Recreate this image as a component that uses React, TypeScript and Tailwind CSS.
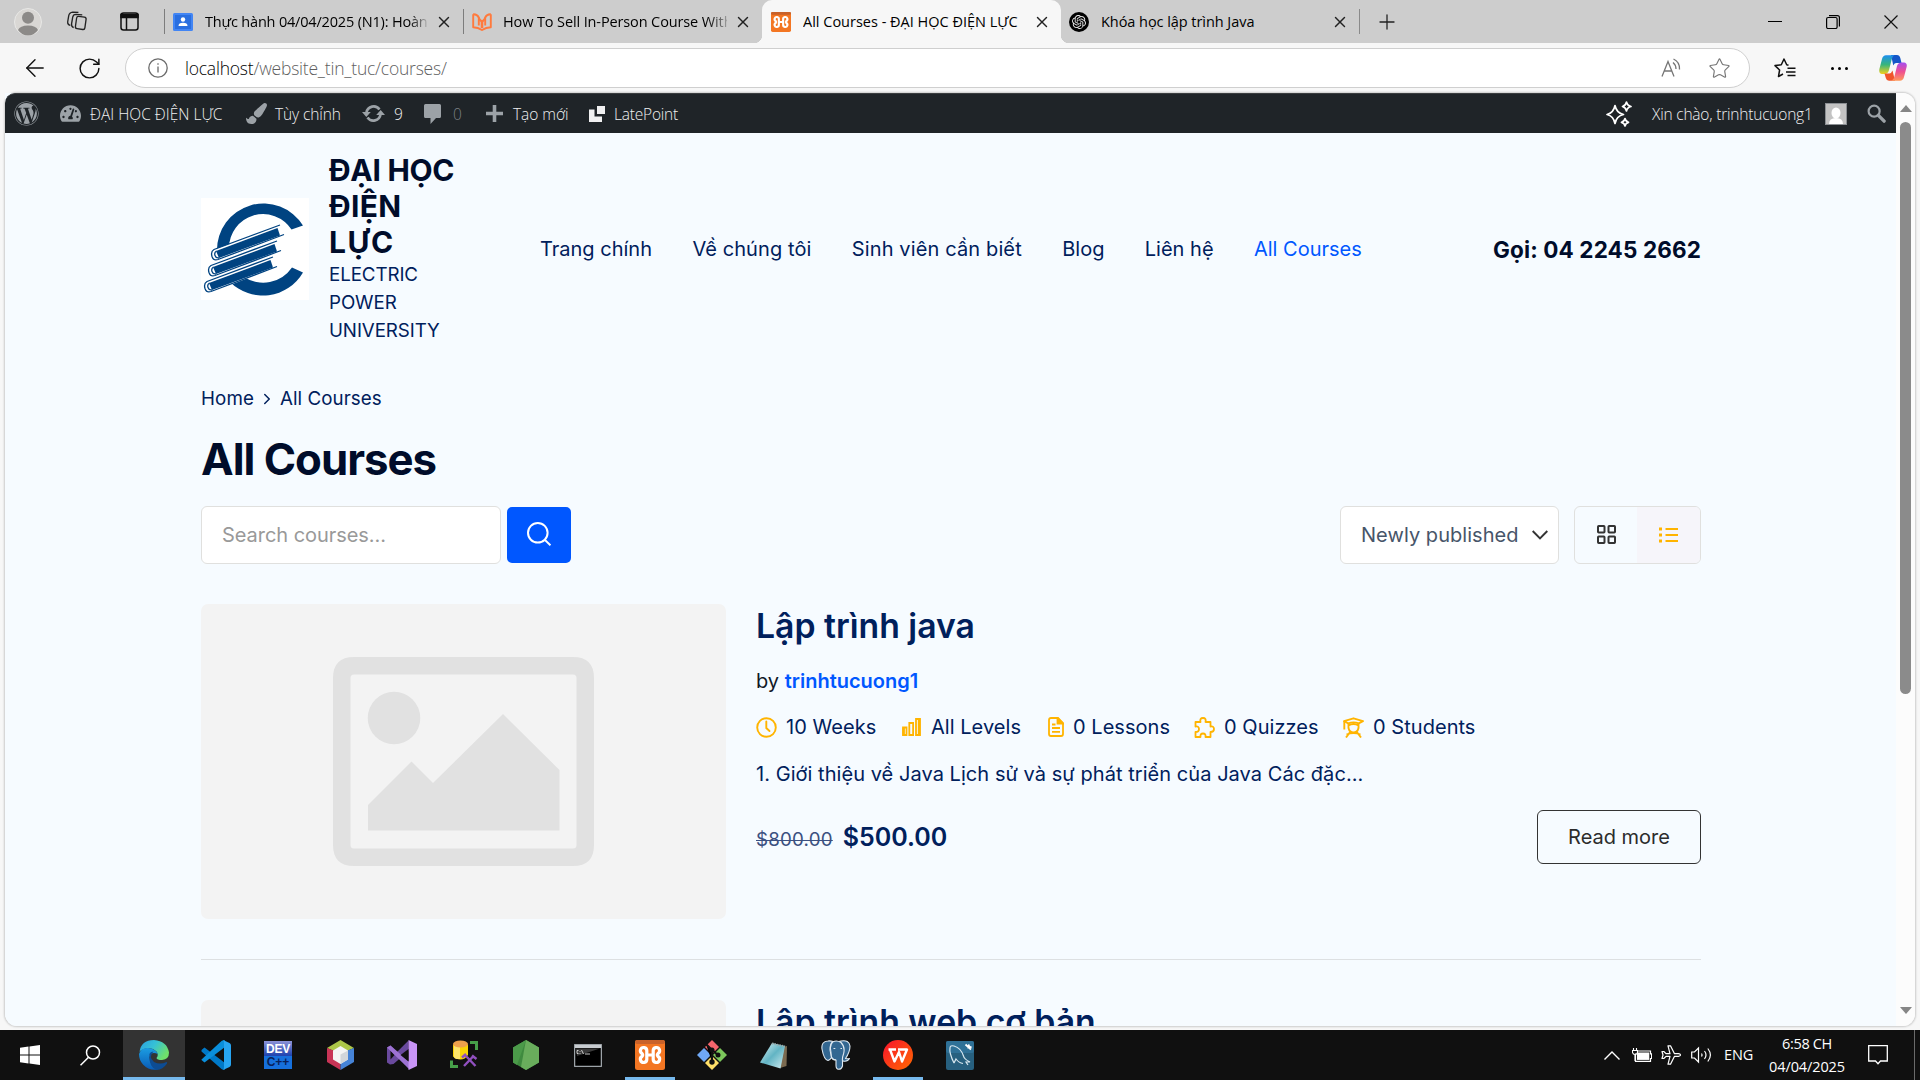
import type { ReactNode } from 'react';
import { ArrowLeft, ChevronRight, Plus, RotateCw, Star, X } from 'lucide-react';
import { FaPaintBrush, FaTachometerAlt, FaWordpress } from 'react-icons/fa';
import { SiOpenai } from 'react-icons/si';

/* ---------- small drawings ---------- */

function XamppIcon({ className }: { className: string }) {
  return (
    <svg viewBox="0 0 30 30" className={className} preserveAspectRatio="none">
      <rect width="30" height="30" rx="2.5" fill="#f37623" />
      <rect width="30" height="4" rx="2" fill="#c9622a" />
      <path
        d="M11.800 15V10.800A3.200 3.200 0 1 0 7 13.500Q8.300 15 7 16.500A3.200 3.200 0 1 0 11.800 19.200V15H18.200V10.800A3.200 3.200 0 1 1 23 13.500Q21.700 15 23 16.500A3.200 3.200 0 1 1 18.200 19.200V15"
        fill="none"
        stroke="#fff"
        strokeWidth="3.200"
        strokeLinejoin="round"
      />
    </svg>
  );
}

function WorkspacesIcon() {
  return (
    <svg viewBox="0 0 22 22" className="h-[21px] w-[22px]" fill="none" stroke="#222" strokeWidth="1.4">
      <rect x="10" y="6" width="10" height="13" rx="2" transform="rotate(8 15 12)" />
      <path d="M7.500 17.500C5.500 16.500 5 15.500 5.300 13.500L6.500 6.500Q7 3.500 10 3.500L16.500 4" />
      <path d="M4 15C1.800 14.500 1 13 1.300 11L2.300 5Q3 1.500 6.500 1.200L12.500 1.500" />
    </svg>
  );
}

function TabActionsIcon() {
  return (
    <svg viewBox="0 0 19 19" className="h-[19px] w-[19px]" fill="none" stroke="#111" strokeWidth="1.5">
      <rect x="1" y="1" width="17" height="17" rx="2.500" />
      <path d="M1 2.500h17v3H1z" fill="#111" />
      <path d="M6.500 6v12" />
    </svg>
  );
}

function ProfileIcon() {
  return (
    <svg viewBox="0 0 28 28" className="h-7 w-7">
      <circle cx="14" cy="14" r="13.500" fill="#d9d7d4" stroke="#e8e8e6" />
      <circle cx="14" cy="9.800" r="6" fill="#8c8a88" />
      <path d="M4 22Q6 17.500 14 17.500T24 22Q20 27.500 14 27.500T4 22Z" fill="#8c8a88" />
    </svg>
  );
}

function ClassroomIcon() {
  return (
    <svg viewBox="0 0 20 18" className="h-[18px] w-5">
      <rect width="20" height="18" rx="1.500" fill="#4285f4" />
      <rect x="2" y="2" width="16" height="14" fill="#2a6fe0" />
      <circle cx="10" cy="6.500" r="2.200" fill="#fff" />
      <path d="M5.500 13q0-3.300 4.500-3.300t4.500 3.300z" fill="#fff" />
    </svg>
  );
}

function BookOwlIcon() {
  return (
    <svg viewBox="0 0 20 18" className="h-[18px] w-5" fill="none" stroke="#ff7a3d" strokeWidth="1.900" strokeLinejoin="round">
      <path d="M1.200 1.300Q5 1 6.800 4.500V12.500M18.800 1.300Q15 1 13.200 4.500V12.500M1.200 1.300V14.200Q6 14.200 10 17Q14 14.200 18.800 14.200V1.300" />
      <path d="M6.800 4.500Q7.500 7.500 10 8.500Q12.500 7.500 13.200 4.500" />
      <path d="M10 8v7" strokeWidth="2.600" />
    </svg>
  );
}

function ReadAloudIcon() {
  return (
    <svg viewBox="0 0 21 20" className="h-5 w-[21px]" fill="none" stroke="#767676" strokeWidth="1.300">
      <path d="M1 18.500L7 3.500L13 18.500M3 13h8" />
      <path d="M12 4.500Q15 7 15 11M12.500 1Q19 4 18.500 11.500" />
    </svg>
  );
}

function FavoritesIcon() {
  return (
    <svg viewBox="0 0 22 20" className="h-5 w-[22px]" fill="none" stroke="#111" strokeWidth="1.500" strokeLinejoin="round">
      <path d="M14.500 7.300L12.700 6.800L10 1L7.300 6.800L1 7.600L5.600 12L4.500 18.500L9 16" />
      <path d="M13.500 10.300h8M12 14h9.500M13.500 17.500h8" />
    </svg>
  );
}

function CopilotIcon() {
  return (
    <svg viewBox="0 0 28 26" className="h-[26px] w-7">
      <defs>
        <linearGradient id="cop-a" x1="0" y1="0" x2="0" y2="1">
          <stop offset="0" stopColor="#1d8ff0" />
          <stop offset=".5" stopColor="#37b57c" />
          <stop offset="1" stopColor="#f3d01c" />
        </linearGradient>
        <linearGradient id="cop-b" x1="0" y1="0" x2="0" y2="1">
          <stop offset="0" stopColor="#a44ef0" />
          <stop offset=".5" stopColor="#ee4f92" />
          <stop offset="1" stopColor="#ff9a5a" />
        </linearGradient>
      </defs>
      <path d="M12 0H18Q20.500 0 21.300 3L22.500 8H17Q15 8 14.300 10.500Z" fill="#1456c8" />
      <path d="M7 0.300H15.500Q13.500 1 12.800 4L10 15Q9 19 5.500 19H3Q-0.500 18.500 0.400 14L3 4Q4 0.300 7 0.300Z" fill="url(#cop-a)" />
      <path d="M16 25.800H10Q7.500 25.800 6.800 23L5.500 18.500H10.500Q12.500 18 13.500 15.500Z" fill="#f0552b" />
      <path d="M21 25.800H12.500Q14.500 25 15.300 22L18 11Q19 7.500 22.500 7.500H25Q28.500 8 27.600 12L25 22Q24 25.800 21 25.800Z" fill="url(#cop-b)" />
    </svg>
  );
}

function UpdateIcon() {
  return (
    <svg viewBox="0 0 23 19" className="h-[19px] w-[23px]" fill="none" stroke="#9ca2a7" strokeWidth="2.600">
      <path d="M4.500 8.500A7.200 7.200 0 0 1 17.500 5.500M18.500 10.500A7.200 7.200 0 0 1 5.500 13.500" />
      <path d="M0 8L4.300 13L8.800 8ZM23 11L18.700 6L14.200 11Z" fill="#9ca2a7" stroke="none" />
    </svg>
  );
}

function CommentIcon() {
  return (
    <svg viewBox="0 0 17 20" className="h-5 w-[17px]">
      <path d="M1.500 0h14Q17 0 17 1.500v11Q17 14 15.500 14H12L6.500 20V14H1.500Q0 14 0 12.500v-11Q0 0 1.500 0z" fill="#9ca2a7" />
    </svg>
  );
}

function LatePointIcon() {
  return (
    <svg viewBox="0 0 16 16" className="h-4 w-4" fill="#f0f0f1">
      <path d="M0 3.500h5.500V10.500H13V16H0zM8 0h8v8H8z" />
    </svg>
  );
}

function SparklesIcon() {
  return (
    <svg viewBox="0 0 26 26" className="h-[26px] w-[26px]" fill="none" stroke="#fff" strokeWidth="1.700" strokeLinejoin="round">
      <path d="M9 4.500Q10.500 12 17.500 13.500Q10.500 15 9 22.500Q7.500 15 1 13.500Q7.500 12 9 4.500Z" />
      <path d="M20.500 1Q21.200 4.500 25 5.500Q21.200 6.500 20.500 10Q19.800 6.500 16.500 5.500Q19.800 4.500 20.500 1Z" />
      <path d="M19 17.500Q19.600 20.500 22.500 21.300Q19.600 22 19 25Q18.400 22 15.500 21.300Q18.400 20.500 19 17.500Z" />
    </svg>
  );
}

function UniversityLogo() {
  return (
    <svg viewBox="0 0 108 102" className="mt-px h-[102px] w-[108px] shrink-0">
      <rect width="108" height="102" fill="#fff" />
      <path
        d="M102 27.500L90.500 31.500A34 34 0 0 0 28 50L16 53A46.500 46.500 0 0 1 102 27.500ZM102 74.500A46.500 46.500 0 0 1 29 84L43 79A35 35 0 0 0 91 69.500Z"
        fill="#004381"
      />
      {[
        { x: 3, y: 83 },
        { x: 7, y: 67 },
        { x: 10, y: 51 },
      ].map((b) => (
        <g key={b.y} transform={`translate(${b.x} ${b.y})`}>
          <path d="M2 1L69 -24.500L69 -17L73 -14L7 11.500Q2 12 0.500 6Q-0.500 2 2 1Z" fill="#fff" />
          <path d="M5 2L66.500 -21L69 -13.500L8 9Z" fill="#004381" />
          <path
            d="M69 -24L3 0.500Q-0.500 2.500 1 7.500Q2.500 12 7 10.500L73 -14.500M5.500 2Q3 3.500 4 6.500T8 8.800"
            fill="none"
            stroke="#004381"
            strokeWidth="1.300"
          />
        </g>
      ))}
    </svg>
  );
}

function SearchGlyph() {
  return (
    <svg viewBox="0 0 24 24" className="h-6 w-6" fill="none" stroke="#fff" strokeWidth="2">
      <circle cx="10.800" cy="10.800" r="9.800" />
      <path d="M17.500 17.500L23.500 23.300" />
    </svg>
  );
}

function GridIcon() {
  return (
    <svg viewBox="0 0 19 19" className="h-[19px] w-[19px]" fill="none" stroke="#333" strokeWidth="2">
      <rect x="1" y="1" width="6.500" height="6.500" rx=".7" />
      <rect x="11.500" y="1" width="6.500" height="6.500" rx=".7" />
      <rect x="1" y="11.500" width="6.500" height="6.500" rx=".7" />
      <rect x="11.500" y="11.500" width="6.500" height="6.500" rx=".7" />
    </svg>
  );
}

function ListIcon() {
  return (
    <svg viewBox="0 0 19 16" className="h-4 w-[19px]" fill="#ffb400">
      <path d="M0 .5h3v3H0zM0 6.500h3v3H0zM0 12.500h3v3H0zM6.500 1h12.500v2H6.500zM6.500 7h12.500v2H6.500zM6.500 13h12.500v2H6.500z" />
    </svg>
  );
}

const meta: { label: string; width: string; icon: ReactNode }[] = [
  {
    label: '10 Weeks',
    width: 'w-[145px]',
    icon: (
      <svg viewBox="0 0 21 21" className="h-[21px] w-[21px]" fill="none" stroke="#ffb400" strokeWidth="1.900">
        <circle cx="10.500" cy="10.500" r="9.300" />
        <path d="M10.300 4.500v6.500l3.200 3" strokeLinecap="round" />
      </svg>
    ),
  },
  {
    label: 'All Levels',
    width: 'w-[147px]',
    icon: (
      <svg viewBox="0 0 19 18" className="mr-px ml-px h-[18px] w-[19px]" fill="none" stroke="#ffb400" strokeWidth="1.800">
        <path d="M1 9.500h3.500v7.500H1zM7.300 5h3.800v12H7.300zM14 1h4v16h-4z" />
        <path d="M1.700 10v7M17 1v16" strokeWidth="2.400" />
      </svg>
    ),
  },
  {
    label: '0 Lessons',
    width: 'w-[146px]',
    icon: (
      <svg viewBox="0 0 16 20" className="h-5 w-4" fill="none" stroke="#ffb400" strokeWidth="1.800">
        <path d="M3 1h7l5 5v11q0 2-2 2H3q-2 0-2-2V3q0-2 2-2z" />
        <path d="M9.500 1v5.500H15z" fill="#ffb400" />
        <path d="M4 7.500h3.500M4 11h8M4 14.800h8" />
      </svg>
    ),
  },
  {
    label: '0 Quizzes',
    width: 'w-[149px]',
    icon: (
      <svg viewBox="0 0 21 21" className="h-[21px] w-[21px]" fill="none" stroke="#ffb400" strokeWidth="1.800" strokeLinejoin="round">
        <path d="M1.500 5H6.500Q5.500 1 9 1T11.500 5H16.500V9.500Q20 9 20 12T16.500 15V20H11.500Q12 16.500 9 16.500T6.500 20H1.500V15Q5 15 5 12T1.500 9.500Z" />
      </svg>
    ),
  },
  {
    label: '0 Students',
    width: 'w-[140px]',
    icon: (
      <svg viewBox="0 0 21 21" className="h-[21px] w-[21px]" fill="none" stroke="#ffb400" strokeWidth="1.900" strokeLinejoin="round">
        <path d="M1 4.200L10.500 1.300L20 4.200L15.700 6.300Q10.500 4.500 5.300 6.300Z" />
        <path d="M1.300 4.500v8M5.500 6.500v4.500Q6.500 15.500 10.500 15.500T15.500 11V6.500M5.500 8.500Q10.500 5.500 15.500 8.500M3 20.500L7.500 14.500M18 20.500L13.500 14.500M3.500 17.500Q10.500 14.500 17.500 17.500" />
      </svg>
    ),
  },
];

/* ---------- browser frame ---------- */

function Tab({ icon, title, active, divider }: { icon: ReactNode; title: ReactNode; active?: boolean; divider?: boolean }) {
  return (
    <div className={`relative flex h-[43px] w-[299px] shrink-0 items-center pl-[9px] ${active ? 'rounded-t-[10px] bg-[#f7f7f7]' : ''}`}>
      {divider && <span className="absolute top-[9px] left-0 h-[25px] w-px bg-[#7d7d7d]" />}
      <span className="flex w-8 shrink-0 items-center">{icon}</span>
      <span className="relative w-[223px] overflow-hidden text-[14.5px] leading-5 whitespace-nowrap text-black">{title}</span>
      <X className="ml-[7px] h-[18px] w-[18px] shrink-0" strokeWidth={1.9} color="#222" />
    </div>
  );
}

function TabStrip() {
  return (
    <div className="flex h-[43px] shrink-0 items-center bg-[#cdcdcd]">
      <div className="flex w-[164px] items-center pl-[14px]">
        <ProfileIcon />
        <span className="ml-6">
          <WorkspacesIcon />
        </span>
        <span className="ml-8">
          <TabActionsIcon />
        </span>
      </div>
      <Tab
        divider
        icon={<ClassroomIcon />}
        title={
          <span className="bg-linear-to-r from-black from-90% to-[#bbb] bg-clip-text tracking-[-0.18px] text-transparent">
            Thực hành 04/04/2025 (N1): Hoàn
          </span>
        }
      />
      <Tab
        divider
        icon={<BookOwlIcon />}
        title={
          <span className="-ml-px bg-linear-to-r from-black from-87% to-[#ccc] bg-clip-text tracking-[-0.12px] text-transparent">
            How To Sell In-Person Course With
          </span>
        }
      />
      <div className="relative">
        <Tab active icon={<XamppIcon className="h-5 w-5" />} title="All Courses - ĐẠI HỌC ĐIỆN LỰC" />
        <span className="absolute bottom-0 -left-2 h-2 w-2 bg-[radial-gradient(circle_at_0_0,transparent_8px,#f7f7f7_8.5px)]" />
        <span className="absolute -right-2 bottom-0 h-2 w-2 bg-[radial-gradient(circle_at_100%_0,transparent_8px,#f7f7f7_8.5px)]" />
      </div>
      <div className="-ml-px">
        <Tab
          icon={
            <span className="flex h-5 w-5 items-center justify-center rounded-full bg-black">
              <SiOpenai size={14} color="#e8e8e8" />
            </span>
          }
          title={<span className="tracking-[-0.05px]">Khóa học lập trình Java</span>}
        />
      </div>
      <span className="h-[25px] w-px bg-[#8a8a8a]" />
      <Plus className="ml-[15px] h-6 w-6" strokeWidth={1.3} color="#222" />
      <div className="ml-auto flex items-center gap-[44px] pr-[22px]">
        <span className="h-px w-[14px] bg-black" />
        <svg viewBox="0 0 14 14" className="h-[14px] w-[14px]" fill="none" stroke="#000" strokeWidth="1.200">
          <rect x=".6" y="2.500" width="10.500" height="11" rx="1.500" />
          <path d="M3 .6H11.500Q13.400 .6 13.400 2.500V11.500" />
        </svg>
        <svg viewBox="0 0 14 14" className="h-[14px] w-[14px]" stroke="#111" strokeWidth="1.200">
          <path d="M.5 .5L13.500 13.500M13.500 .5L.5 13.500" />
        </svg>
      </div>
    </div>
  );
}

function AddressRow() {
  return (
    <div className="flex h-[50px] shrink-0 items-center bg-[#f7f7f7]">
      <ArrowLeft className="ml-[21px] h-[28px] w-[28px]" strokeWidth={1.2} color="#111" />
      <RotateCw className="ml-[28px] h-[25px] w-[25px]" strokeWidth={1.4} color="#111" />
      <div className="ml-[23px] flex h-10 w-[1625px] items-center rounded-full border border-[#cfcfcf] bg-white pr-[18px] pl-[22px]">
        <svg viewBox="0 0 20 20" className="h-5 w-5" fill="none" stroke="#6b6b6b" strokeWidth="1.300">
          <circle cx="10" cy="10" r="9.200" />
          <path d="M10 8.500v6M10 5.200v1.600" />
        </svg>
        <span className="ml-[17px] text-[17.5px] leading-6 font-light tracking-[-0.22px] text-[#5f5f5f]">
          <span className="text-black">localhost</span>/website_tin_tuc/courses/
        </span>
        <span className="ml-auto">
          <ReadAloudIcon />
        </span>
        <Star className="ml-[26px] h-[23px] w-[23px]" strokeWidth={1.2} color="#767676" />
      </div>
      <span className="ml-[24px]">
        <FavoritesIcon />
      </span>
      <span className="ml-[35px] flex gap-[4px]">
        <span className="h-[3px] w-[3px] rounded-full bg-black" />
        <span className="h-[3px] w-[3px] rounded-full bg-black" />
        <span className="h-[3px] w-[3px] rounded-full bg-black" />
      </span>
      <span className="ml-[31px]">
        <CopilotIcon />
      </span>
    </div>
  );
}

/* ---------- site ---------- */

function AdminBar() {
  return (
    <div className="flex h-10 shrink-0 items-center rounded-tl-[10px] border-t border-[#3b3e40] bg-[#1f2428] pl-[9px] text-[15.5px] leading-5 font-[350] text-[#f0f0f1]">
      <FaWordpress size={25} color="#9ca2a7" />
      <FaTachometerAlt size={21} color="#9ca2a7" className="ml-[21px]" />
      <span className="ml-[9px] w-[156px]">ĐẠI HỌC ĐIỆN LỰC</span>
      <FaPaintBrush size={21} color="#9ca2a7" />
      <span className="ml-[8px] w-[87px] tracking-[-0.1px]">Tùy chỉnh</span>
      <UpdateIcon />
      <span className="ml-[9px] w-[30px]">9</span>
      <CommentIcon />
      <span className="ml-[12px] w-[33px] text-[#7c8185]">0</span>
      <svg viewBox="0 0 17 17" className="h-[17px] w-[17px]" fill="#9ca2a7">
        <path d="M6.700 0h3.600v6.700H17v3.600h-6.700V17H6.700v-6.700H0V6.700h6.700z" />
      </svg>
      <span className="ml-[10px] w-[76px] tracking-[-0.05px]">Tạo mới</span>
      <LatePointIcon />
      <span className="ml-[9px] pt-px tracking-[-0.2px]">LatePoint</span>
      <span className="ml-auto">
        <SparklesIcon />
      </span>
      <span className="ml-[20px] w-[165px] tracking-[-0.2px] whitespace-nowrap">Xin chào, trinhtucuong1</span>
      <span className="ml-[8px] flex h-[22px] w-[22px] border border-[#8b8f93] bg-[#c3c3c3]">
        <svg viewBox="0 0 20 20" className="h-5 w-5" fill="#fff">
          <ellipse cx="10" cy="9" rx="4.500" ry="5.500" />
          <path d="M3 20q0-6 7-6t7 6z" />
        </svg>
      </span>
      <svg viewBox="0 0 20 20" className="mr-[10px] ml-[20px] h-[19px] w-[19px]" fill="none" stroke="#9ca2a7">
        <circle cx="7.500" cy="7.500" r="5.800" strokeWidth="2.300" />
        <path d="M12 12L18 18" strokeWidth="3.600" strokeLinecap="round" />
      </svg>
    </div>
  );
}

function SiteHeader() {
  return (
    <header className="mt-[18px] flex h-[194px] items-center">
      <UniversityLogo />
      <div className="ml-5 w-[150px]">
        <p className="text-[30px] leading-9 font-bold tracking-[-0.3px] text-[#000c2a]">
          ĐẠI HỌC
          <br />
          <span className="tracking-[0.3px]">ĐIỆN</span>
          <br />
          <span className="tracking-[1.6px]">LỰC</span>
        </p>
        <p className="mt-px text-[18.75px] leading-7 tracking-[-0.1px] text-[#00205c]">
          ELECTRIC
          <br />
          POWER
          <br />
          UNIVERSITY
        </p>
      </div>
      <nav className="ml-[61px] flex gap-[40.4px] pt-px text-xl whitespace-nowrap text-[#00205c]">
        <span>Trang chính</span>
        <span className="tracking-[0.08px]">Về chúng tôi</span>
        <span className="tracking-[0.13px]">Sinh viên cần biết</span>
        <span>Blog</span>
        <span>Liên hệ</span>
        <span className="text-[#0057ff]">All Courses</span>
      </nav>
      <span className="ml-auto pt-[3px] text-[22.5px] font-bold tracking-[0.13px] text-[#000c2a]">Gọi: 04 2245 2662</span>
    </header>
  );
}

function Toolbar() {
  return (
    <div className="mt-[24px] flex h-[58px] shrink-0 text-xl">
      <div className="flex w-[300px] items-center rounded-[6px] border border-[#e0e0de] bg-white pl-5 tracking-[-0.05px] text-[#999]">
        Search courses...
      </div>
      <div className="my-px ml-[6px] flex w-[64px] items-center justify-center rounded-[5px] bg-[#0057ff] pb-[2px]">
        <SearchGlyph />
      </div>
      <div className="ml-auto flex w-[219px] items-center rounded-[6px] border border-[#e0e0de] bg-white pl-[20px] tracking-[0.05px] text-[#475569]">
        Newly published
        <svg viewBox="0 0 16 10" className="ml-[13px] h-[10px] w-4" fill="none" stroke="#333" strokeWidth="1.900">
          <path d="M.7 1L8 8.500L15.300 1" />
        </svg>
      </div>
      <div className="ml-[15px] flex w-[127px] overflow-hidden rounded-[6px] border border-[#e0e0de]">
        <div className="flex w-[62px] items-center justify-center pb-[2px]">
          <GridIcon />
        </div>
        <div className="flex flex-1 items-center justify-center bg-[#f6f5fa] pb-px">
          <ListIcon />
        </div>
      </div>
    </div>
  );
}

function Thumbnail() {
  return (
    <div className="flex h-[315px] w-[525px] shrink-0 justify-center rounded-[7px] bg-[#f3f3f3] pt-[53px]">
      <svg viewBox="0 0 261 209" className="h-[209px] w-[261px]" fill="#e1e1e1">
        <path
          fillRule="evenodd"
          d="M21 0H240Q261 0 261 21V188Q261 209 240 209H21Q0 209 0 188V21Q0 0 21 0ZM21 17.500Q17.500 17.500 17.500 21V188Q17.500 191.500 21 191.500H240Q243.500 191.500 243.500 188V21Q243.500 17.500 240 17.500Z"
        />
        <circle cx="61" cy="61" r="26.300" />
        <path d="M35 148L78.500 104.500L100 126L170 57L226.500 113V173.500H35Z" />
      </svg>
    </div>
  );
}

function CourseCard({ title }: { title: string }) {
  return (
    <article className="flex h-[315px] shrink-0">
      <Thumbnail />
      <div className="ml-[30px] flex-1 pt-px text-xl leading-[30px] text-[#00205c]">
        <h2 className="text-[33.75px] leading-[42px] font-semibold">{title}</h2>
        <p className="mt-[19px] text-[#111827]">
          by <span className="font-semibold text-[#0057ff]">trinhtucuong1</span>
        </p>
        <div className="mt-[16px] flex h-[30px] items-center">
          {meta.map((m) => (
            <div key={m.label} className={`flex shrink-0 items-center gap-[9px] tracking-[0.04px] whitespace-nowrap ${m.width}`}>
              {m.icon}
              {m.label}
            </div>
          ))}
        </div>
        <p className="mt-[17px] tracking-[0.05px] whitespace-nowrap">
          1. Giới thiệu về Java Lịch sử và sự phát triển của Java Các đặc...
        </p>
        <div className="mt-[21px] flex h-[54px] items-center justify-between">
          <p className="flex items-baseline pt-[2px]">
            <span className="text-[18.75px] tracking-[0.2px] text-[#3b5080] line-through decoration-1">$800.00</span>
            <span className="ml-[10px] text-[25px] font-semibold">$500.00</span>
          </p>
          <span className="flex h-[54px] w-[164px] items-center justify-center rounded-[6px] border border-[#333] text-[#2c2c2c]">
            Read more
          </span>
        </div>
      </div>
    </article>
  );
}

function Site() {
  return (
    <div className="flex h-[933px] flex-1 flex-col overflow-hidden rounded-bl-[12px] bg-[#f6fbff]">
      <AdminBar />
      <main className="ml-[196px] flex w-[1500px] flex-col font-['Inter',sans-serif]">
        <SiteHeader />
        <div className="mt-[40px] flex h-7 shrink-0 items-center text-[18.75px] text-[#00205c]">
          <span className="tracking-[0.1px]">Home</span>
          <ChevronRight className="mx-[4px] h-[18px] w-[18px]" strokeWidth={2} />
          <span className="tracking-[0.06px]">All Courses</span>
        </div>
        <h1 className="mt-[25px] text-[43.75px] leading-[44px] font-bold tracking-[-1px] text-[#000c2a]">All Courses</h1>
        <Toolbar />
        <div className="mt-10">
          <CourseCard title="Lập trình java" />
        </div>
        <div className="my-10 h-px shrink-0 bg-[#dde0e2]" />
        <CourseCard title="Lập trình web cơ bản" />
      </main>
    </div>
  );
}

function Scrollbar() {
  return (
    <div className="flex h-[933px] w-[19px] flex-col items-center rounded-r-[12px] bg-[#fcfcfc]">
      <span className="mt-3 h-0 w-0 border-x-[6.500px] border-b-[7px] border-x-transparent border-b-[#868686]" />
      <span className="mt-[10px] h-[572px] w-[11px] rounded-full bg-[#8b8b8b]" />
      <span className="mt-auto mb-[12px] h-0 w-0 border-x-[6.500px] border-t-[7px] border-x-transparent border-t-[#868686]" />
    </div>
  );
}

/* ---------- taskbar ---------- */

function EdgeIcon() {
  return (
    <svg viewBox="0 0 30 30" className="h-[30px] w-[30px]">
      <defs>
        <linearGradient id="edge-a" x1="0" y1="0" x2="1" y2=".5">
          <stop offset="0" stopColor="#2a9fe0" />
          <stop offset=".5" stopColor="#35c1d6" />
          <stop offset="1" stopColor="#6fe06a" />
        </linearGradient>
        <linearGradient id="edge-b" x1="0" y1="0" x2="0" y2="1">
          <stop offset="0" stopColor="#1b9de2" />
          <stop offset="1" stopColor="#0a5bb5" />
        </linearGradient>
      </defs>
      <path d="M0.500 12Q2 0 15 0Q28 1 30 12.500Q30 19.500 23 20Q18 20 17.500 18Q20 15 17.500 11.500Q13 7 7 8.500Q2 9.500 0.500 12Z" fill="url(#edge-a)" />
      <path d="M0 14Q2 7.500 9 8Q16 8.500 19 14Q12 11 10.500 17Q10 25 19 29.500Q10 31 4 24.500Q0 20 0 14Z" fill="url(#edge-b)" />
      <path d="M10.500 16Q9.500 12 14.500 11.500Q9 17 15 22Q21 25 27.500 22Q28.500 22 28 23.500Q24 29.500 17.500 30Q10 27 10.500 16Z" fill="#0d4c93" />
    </svg>
  );
}

function VsCodeIcon() {
  return (
    <svg viewBox="0 0 30 30" className="h-[30px] w-[30px]">
      <path d="M0.500 10L3.500 7.500L24 23V29.500Q21.500 30 20.500 29L0.500 11.500Z" fill="#0079c8" />
      <path d="M0.500 19.500L20.500 1Q22 0 24 0.500V7L3.500 22.500L0.500 20Z" fill="#0a8fdc" />
      <path d="M22 0L28.500 3Q30 3.800 30 5.500V24.500Q30 26.200 28.500 27L22 30Q23 29 23 27V3Q23 1 22 0Z" fill="#27a5f2" />
    </svg>
  );
}

function NetBeansIcon() {
  return (
    <svg viewBox="0 0 27 30" className="h-[30px] w-[27px]">
      <path d="M13.500 0L27 8L20 11L13.500 8L7 11L0 8Z" fill="#acc648" />
      <path d="M0 8L6.500 10.500V19L13.500 23V30L0 22Z" fill="#c93456" />
      <path d="M27 8L20.500 10.500V19L13.500 23V30L27 22Z" fill="#4684d8" />
      <path d="M13.500 6L21 10.500V19.500L13.500 24L6 19.500V10.500Z" fill="#f4f4f4" />
      <path d="M13.500 14.500L21 10.500V19.500L13.500 24Z" fill="#d2d6da" />
    </svg>
  );
}

function VisualStudioIcon() {
  return (
    <svg viewBox="0 0 30 30" className="h-[30px] w-[30px]">
      <path d="M0 7.500L3.500 5.500L10 12L21.500 0.500V11L6.500 24L3 24.500L0 22.500Z" fill="#6a4a9e" />
      <path d="M3.500 10.500V19.500L7.500 15Z" fill="#101010" />
      <path d="M3.500 5.500L22.500 22V29.500L0 7.500Z" fill="#9d72d3" />
      <path d="M21.500 0L30 4V26L21.500 30Z" fill="#c894f6" />
      <path d="M21.500 9L13.500 15L21.500 21.500Z" fill="#101010" />
    </svg>
  );
}

function SsmsIcon() {
  return (
    <svg viewBox="0 0 28 30" className="h-[30px] w-7">
      <path d="M3 4.500H18V15Q15 19.500 10.500 19.500T3 16.500Z" fill="#fbd306" />
      <path d="M4 6h6v13H7Q4 18.500 4 16.500Z" fill="#fde46b" />
      <ellipse cx="10.500" cy="4" rx="7.500" ry="3.500" fill="#efa04c" />
      <path d="M20 2.500H26.500V10M1.500 20.500V26.500H8" fill="none" stroke="#46a049" strokeWidth="3" />
      <path d="M14 26L24 15.500M14.500 14.500L25.500 26M12 17.500L16 14M22 15.500L26.500 19" stroke="#9150c0" strokeWidth="2.400" />
    </svg>
  );
}

function ConsoleIcon() {
  return (
    <svg viewBox="0 0 28 23" className="h-[23px] w-7">
      <rect x=".5" y=".5" width="27" height="22" rx="1" fill="#000" stroke="#9da3a8" strokeWidth="1.500" />
      <rect x="1" y="1" width="26" height="3" fill="#c8ccd0" />
      <path d="M2 4.500H26L3 12Z" fill="#3a3a3a" />
      <path d="M4.500 6.500h-1.500v3h1.500M6 7v.8M6 9v.8M7.500 6l2 4M11 10h5" stroke="#ddd" strokeWidth=".9" fill="none" />
    </svg>
  );
}

function GitIcon() {
  return (
    <svg viewBox="0 0 30 30" className="h-[30px] w-[30px]">
      <path d="M15 0L22 7L15 14L8 7Z" fill="#f5656c" />
      <path d="M23 8L30 15L23 22L16 15Z" fill="#7cc75b" />
      <path d="M7 8L14 15L7 22L0 15Z" fill="#6fa8f5" />
      <path d="M15 16L22 23L15 30L8 23Z" fill="#ffdf68" />
      <path d="M9 4L15 10V22M15 10L21 15" stroke="#111" strokeWidth="2" />
      <circle cx="15" cy="10" r="2.500" fill="#111" />
      <circle cx="21" cy="15" r="2.500" fill="#111" />
      <circle cx="15" cy="22" r="2.700" fill="#111" />
    </svg>
  );
}

function NotepadIcon() {
  return (
    <svg viewBox="0 0 28 27" className="h-[27px] w-7">
      <defs>
        <linearGradient id="note" x1="0" y1="0" x2="1" y2="1">
          <stop offset="0" stopColor="#dff3f5" />
          <stop offset=".5" stopColor="#62b4c4" />
          <stop offset="1" stopColor="#d3eef2" />
        </linearGradient>
      </defs>
      <path d="M22 5L27 4L26.500 24L20 26Z" fill="#7b6a50" />
      <path d="M12 1L25 4L20.500 26.500L0 20.500Z" fill="url(#note)" />
      <path d="M12 1.500L25 4.500" stroke="#9aa" strokeWidth="2" strokeDasharray="1.500 1" />
    </svg>
  );
}

function PostgresIcon() {
  return (
    <svg viewBox="0 0 30 30" className="h-[30px] w-[30px]" fill="#336791" stroke="#dfe9f1" strokeWidth="1.100" strokeLinejoin="round">
      <path d="M7 1Q0 1.500 1 9Q3 20 7 20.500Q9 20 10.500 17.500L9 10Q9 4 12 1.500Q9.500 .7 7 1Z" />
      <path d="M20 1Q28 -.5 29 6Q29 12 24.500 18.500Q26 19 28.500 18.500Q26.500 22 22 21L20 17L21.500 10Q22 4 18 1.500Z" />
      <path d="M12 1.800Q16 0 20 2.500Q24.500 7 22.500 14Q21 18 21.500 21V26Q20.500 29.500 17.500 29.300Q15 29 15 25.500V20Q10 19.500 10.300 15L9.500 9Q9 4 12 1.800Z" />
      <path d="M10.500 17.500Q12 20.500 15 19.800M12.500 8.500h1.800M19.500 8.500h1.500" fill="none" />
    </svg>
  );
}

function WpsIcon() {
  return (
    <svg viewBox="0 0 30 30" className="h-[30px] w-[30px]">
      <defs>
        <linearGradient id="wps" x1="0" y1="0" x2="1" y2="1">
          <stop offset="0" stopColor="#f8122c" />
          <stop offset="1" stopColor="#ff6a00" />
        </linearGradient>
      </defs>
      <circle cx="15" cy="15" r="15" fill="url(#wps)" />
      <path d="M5.500 9.500H13M7 9.500L11.500 21.500L16 12L19 21.500L24 9.500H15" fill="none" stroke="#fff" strokeWidth="2.400" strokeLinejoin="round" />
    </svg>
  );
}

function WorkbenchIcon() {
  return (
    <svg viewBox="0 0 28 29" className="h-[29px] w-7" fill="none">
      <rect width="28" height="29" rx="2" fill="#27607f" />
      <rect width="28" height="12" rx="2" fill="#2f7197" />
      <path d="M8 22Q3 12 4 7Q4 4 8 5Q15 7 17.500 15Q18 18 24 21L20 21L22 24M8 22L10 18Q13 22 17 22.500" stroke="#d8e8f0" strokeWidth="1.200" />
      <path d="M19.500 3.500L25 8.500M23 3.500L22.500 6.500L25.500 6" stroke="#fff" strokeWidth="1.800" />
    </svg>
  );
}

function DevCppIcon() {
  return (
    <span className="flex h-7 w-7 flex-col items-center overflow-hidden bg-linear-to-b from-[#8d93d8] via-[#2446b0] to-[#0b3ca5] font-['Liberation_Sans',sans-serif] font-bold">
      <span className="pt-px text-[12px] leading-[14px] tracking-[-0.2px] text-white">DEV</span>
      <span className="w-full bg-[#1670dd] text-center text-[12px] leading-[13px] text-[#08205a]">C++</span>
    </span>
  );
}

function TaskButton({ children, state }: { children: ReactNode; state?: 'active' | 'open' }) {
  return (
    <div className={`relative flex h-[50px] w-[62px] shrink-0 items-center justify-center ${state === 'active' ? 'bg-[#333]' : ''}`}>
      {children}
      {state === 'active' && <span className="absolute inset-x-0 bottom-0 h-[3px] bg-[#76b9ed]" />}
      {state === 'open' && <span className="absolute inset-x-[6px] bottom-0 h-[3px] bg-[#76b9ed]" />}
    </div>
  );
}

function Taskbar() {
  return (
    <div className="flex h-[50px] shrink-0 items-center bg-[#101010]">
      <svg viewBox="0 0 20 20" className="ml-5 h-5 w-5" fill="#fff">
        <path d="M0 2.800L8.500 1.600V9.500H0zM9.500 1.400L20 0V9.500H9.500zM0 10.500H8.500V18.400L0 17.200zM9.500 10.500H20V20L9.500 18.600z" />
      </svg>
      <svg viewBox="0 0 21 21" className="ml-10 h-[21px] w-[21px]" fill="none" stroke="#fff" strokeWidth="1.500">
        <circle cx="13" cy="7.500" r="6.500" />
        <path d="M8.500 12.200L.5 20.300" />
      </svg>
      <div className="ml-[22px] flex">
        <TaskButton state="active">
          <EdgeIcon />
        </TaskButton>
        <TaskButton>
          <VsCodeIcon />
        </TaskButton>
        <TaskButton>
          <DevCppIcon />
        </TaskButton>
        <TaskButton>
          <NetBeansIcon />
        </TaskButton>
        <TaskButton>
          <VisualStudioIcon />
        </TaskButton>
        <TaskButton>
          <SsmsIcon />
        </TaskButton>
        <TaskButton>
          <svg viewBox="0 0 26 30" className="h-[30px] w-[26px]">
            <path d="M13 0L26 7.500V22.500L13 30L0 22.500V7.500Z" fill="#3f8a3f" />
            <path d="M13 0L26 7.500V22.500L13 30L8 27Z" fill="#69ad5c" />
            <path d="M0 7.500L13 0L4 25L0 22.500Z" fill="#4b9a49" />
          </svg>
        </TaskButton>
        <TaskButton>
          <ConsoleIcon />
        </TaskButton>
        <TaskButton state="open">
          <XamppIcon className="h-[30px] w-[30px]" />
        </TaskButton>
        <TaskButton>
          <GitIcon />
        </TaskButton>
        <TaskButton>
          <NotepadIcon />
        </TaskButton>
        <TaskButton>
          <PostgresIcon />
        </TaskButton>
        <TaskButton state="open">
          <WpsIcon />
        </TaskButton>
        <TaskButton>
          <WorkbenchIcon />
        </TaskButton>
      </div>
      <div className="ml-auto flex items-center text-[14.5px] text-white">
        <svg viewBox="0 0 16 9" className="h-[9px] w-4" fill="none" stroke="#fff" strokeWidth="1.400">
          <path d="M.5 8.500L8 1L15.500 8.500" />
        </svg>
        <svg viewBox="0 0 20 14" className="ml-[12px] h-[14px] w-5">
          <path d="M3.500 5.500V13.300H18.500V10.500H19.600V5.800H18.500V3H6" fill="none" stroke="#fff" strokeWidth="1.200" />
          <rect x="5" y="4.500" width="12.300" height="7.400" fill="#fff" />
          <path d="M1.500 0v2.500M4.500 0v2.500M.5 2.500h5v2q-.5 2-2.500 2T.5 4.500zM3 6v7" stroke="#fff" strokeWidth="1.100" fill="none" />
        </svg>
        <svg viewBox="0 0 20 20" className="ml-[9px] h-5 w-5" fill="none" stroke="#fff" strokeWidth="1.200" strokeLinejoin="round">
          <path d="M1 6.500H2.800L5 8.700H9L7 .8H9.500L13.500 8.700H17.500Q19.500 9 19.500 10T17.500 11.300H13.500L9.500 19.200H7L9 11.300H5L2.800 13.500H1L2 10Z" />
        </svg>
        <svg viewBox="0 0 21 18" className="ml-[10px] h-[18px] w-[21px]" fill="none" stroke="#fff" strokeWidth="1.200">
          <path d="M.7 6H3.500L7.500 2V16L3.500 12H.7Z" />
          <path d="M10.500 7.500q1 1.500 0 3M13.500 5q3 4 0 8M16.800 2.500Q22 9 16.800 15.500" />
        </svg>
        <span className="ml-[12px] tracking-[-0.2px]">ENG</span>
        <span className="ml-[16px] flex flex-col items-center leading-[23px]">
          <span className="tracking-[-0.35px]">6:58 CH</span>
          <span className="tracking-[-0.1px]">04/04/2025</span>
        </span>
        <svg viewBox="0 0 20 20" className="ml-[23px] h-5 w-5" fill="none" stroke="#fff" strokeWidth="1.300">
          <path d="M.7 .7H19.300V16H12.500L10 18.800L7.500 16H.7Z" />
        </svg>
        <span className="mr-[5px] ml-[26px] h-[50px] w-px bg-[#6a6a6a]" />
      </div>
    </div>
  );
}

export default function App() {
  return (
    <div className="flex h-[1080px] w-[1920px] flex-col overflow-hidden bg-[#f7f7f7] font-['Open_Sans',sans-serif]">
      <TabStrip />
      <AddressRow />
      <div className="flex h-[937px] shrink-0 px-[5px]">
        <div className="flex h-[933px] flex-1 rounded-[12px] shadow-[0_0_2px_1px_rgba(0,0,0,0.18)]">
          <Site />
          <Scrollbar />
        </div>
      </div>
      <Taskbar />
    </div>
  );
}
